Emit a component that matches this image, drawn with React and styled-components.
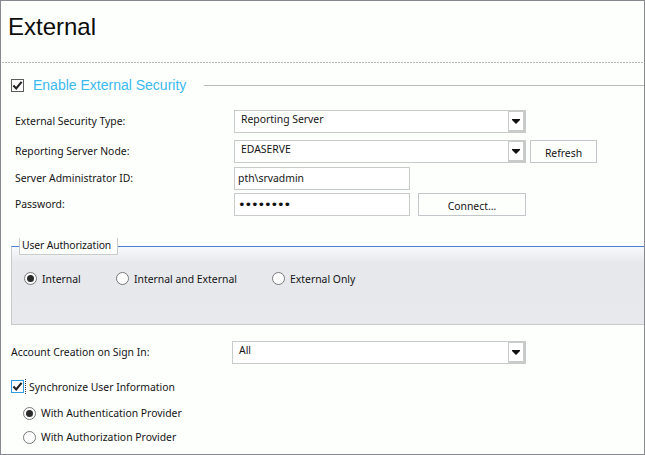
import React from "react";
import styled, { createGlobalStyle } from "styled-components";

const GlobalStyle = createGlobalStyle`
  html, body {
    margin: 0;
    padding: 0;
    background: #fdfffd;
  }
  * {
    box-sizing: border-box;
  }
`;

const Frame = styled.div`
  width: 645px;
  height: 455px;
  border: 1px solid #88888e;
  background: #fdfffd;
  overflow: hidden;
  font-family: "Noto Sans", "Liberation Sans", sans-serif;
  font-size: 10.4px;
  color: #141414;
`;

const Header = styled.div`
  height: 61px;
  margin-left: 1px;
  padding: 11px 0 0 6px;
`;

const Dashed = styled.div`
  height: 1px;
  margin-left: 1px;
  background: repeating-linear-gradient(90deg, #b4b6b6 0 2px, transparent 2px 3px);
`;

const Title = styled.h1`
  margin: 0;
  font-family: "Liberation Sans", Arial, sans-serif;
  font-size: 24px;
  font-weight: 400;
  line-height: 30px;
  color: #0c0c0c;
`;

const SectionHead = styled.div`
  display: flex;
  align-items: center;
  height: 14px;
  margin: 15px 0 0 10px;
`;

const SectionTitle = styled.span`
  margin-left: 9px;
  font-family: "Liberation Sans", Arial, sans-serif;
  font-size: 14px;
  color: #3cb9ee;
`;

const Rule = styled.div`
  flex: 1;
  height: 1px;
  margin-left: 18px;
  background: #b9bbbb;
`;

const Box = styled.span`
  position: relative;
  display: flex;
  align-items: center;
  justify-content: center;
  width: 13px;
  height: 13px;
  border: 1px solid ${(props) => (props.$focused ? "#2c9be0" : "#5c5c5c")};
  background: #fff;
  svg {
    display: block;
  }
`;

const FocusMark = styled.span`
  position: absolute;
  top: -2px;
  right: -3px;
  height: 15px;
  border-right: 1px dotted #333;
`;

const Form = styled.div`
  margin: 18px 0 0 14px;
`;

const FormRow = styled.div`
  display: flex;
  align-items: center;
  height: 23px;
  margin-top: ${(props) => props.$top || 0};
`;

const Label = styled.label`
  flex: none;
  width: ${(props) => props.$width || "219px"};
  margin-top: -2px;
  white-space: nowrap;
`;

const SelectBox = styled.div`
  display: flex;
  justify-content: space-between;
  width: ${(props) => props.$width || "292px"};
  height: 23px;
  padding: 0 0 0 6px;
  border: 1px solid #c8cbca;
  background: #fff;
  line-height: 17px;
`;

const Arrow = styled.span`
  display: flex;
  align-items: center;
  justify-content: center;
  width: 17px;
  height: 21px;
  border: 1px solid #c8cbca;
  border-right-width: 2px;
  border-bottom-width: 2px;
  background: #fff;
`;

const TextInput = styled.input`
  width: 176px;
  height: 23px;
  padding: 0 4px 2px 3px;
  border: 1px solid #c8cbca;
  background: #fff;
  font: inherit;
  color: inherit;
  outline: none;
`;

const PasswordInput = styled(TextInput)`
  padding-bottom: 0;
  font-family: "DejaVu Sans", sans-serif;
  font-size: 13px;
  letter-spacing: -1.17px;
  color: #111;
`;

const Button = styled.button`
  height: 23px;
  width: ${(props) => props.$width};
  margin-left: ${(props) => props.$gap};
  padding: 2px 0 0;
  border: 1px solid #c2c6ca;
  background: #fdfffd;
  font: inherit;
  color: inherit;
`;

const Group = styled.div`
  position: relative;
  height: 79px;
  margin: 30px 0 0 10px;
  border-top: 1px solid #4a7fd0;
  border-left: 1px solid #c8cbca;
  border-bottom: 1px solid #c8cbca;
  background: linear-gradient(#f7fafd 0, #f2f4f7 5px, #e6e8ec 16px, #e7e9ec 100%);
`;

const Legend = styled.div`
  position: absolute;
  top: -9px;
  left: 7px;
  width: 99px;
  height: 17px;
  padding-left: 2px;
  border: 1px solid #c8cbca;
  border-top: 0;
  background: #fdfffd;
  line-height: 15px;
  letter-spacing: -0.15px;
  white-space: nowrap;
`;

const RadioRow = styled.div`
  display: flex;
  align-items: center;
  height: 13px;
  margin: 25px 0 0 12px;
`;

const RadioItem = styled.label`
  display: flex;
  align-items: center;
  gap: 5px;
  width: ${(props) => props.$width};
  margin-left: ${(props) => props.$indent || 0};
  margin-top: ${(props) => props.$top || 0};
  white-space: nowrap;
`;

const Radio = styled.span`
  display: flex;
  align-items: center;
  justify-content: center;
  width: 13px;
  height: 13px;
  border: 1px solid #77797b;
  border-radius: 50%;
  background: #fff;
  &::after {
    content: "";
    display: ${(props) => (props.$on ? "block" : "none")};
    width: 7px;
    height: 7px;
    border-radius: 50%;
    background: #2a2a2a;
  }
`;

const AccountRow = styled(FormRow)`
  margin: 16px 0 0 10px;
`;

const SyncRow = styled.label`
  display: flex;
  align-items: center;
  height: 13px;
  margin: 16px 0 0 10px;
`;

const SyncText = styled.span`
  margin-left: 5px;
  white-space: nowrap;
`;

const Check = () => (
  <svg width="11" height="11" viewBox="0 0 11 11">
    <path d="M1.4 5.6 L4.2 8.4 L9.6 1.8" fill="none" stroke="#222" strokeWidth="2.1" />
  </svg>
);

const Caret = () => (
  <svg width="8" height="5" viewBox="0 0 8 5">
    <path d="M0 0 H8 V1 L4 5 L0 1 Z" fill="#111" />
  </svg>
);

const Select = ({ value, width }) => (
  <SelectBox $width={width}>
    {value}
    <Arrow>
      <Caret />
    </Arrow>
  </SelectBox>
);

export default function App() {
  return (
    <Frame>
      <GlobalStyle />
      <Header>
        <Title>External</Title>
      </Header>
      <Dashed />
      <SectionHead>
        <Box>
          <Check />
        </Box>
        <SectionTitle>Enable External Security</SectionTitle>
        <Rule />
      </SectionHead>
      <Form>
        <FormRow>
          <Label>External Security Type:</Label>
          <Select value="Reporting Server" />
        </FormRow>
        <FormRow $top="7px">
          <Label>Reporting Server Node:</Label>
          <Select value="EDASERVE" />
          <Button $width="67px" $gap="4px">Refresh</Button>
        </FormRow>
        <FormRow $top="4px">
          <Label>Server Administrator ID:</Label>
          <TextInput readOnly value="pth\srvadmin" />
        </FormRow>
        <FormRow $top="3px">
          <Label>Password:</Label>
          <PasswordInput readOnly type="password" value="password" />
          <Button $width="108px" $gap="8px">Connect...</Button>
        </FormRow>
      </Form>
      <Group>
        <Legend>User Authorization</Legend>
        <RadioRow>
          <RadioItem $width="92px">
            <Radio $on />
            Internal
          </RadioItem>
          <RadioItem $width="156px">
            <Radio />
            Internal and External
          </RadioItem>
          <RadioItem>
            <Radio />
            External Only
          </RadioItem>
        </RadioRow>
      </Group>
      <AccountRow>
        <Label $width="221px">Account Creation on Sign In:</Label>
        <Select value="All" width="294px" />
      </AccountRow>
      <SyncRow>
        <Box $focused>
          <Check />
          <FocusMark />
        </Box>
        <SyncText>Synchronize User Information</SyncText>
      </SyncRow>
      <RadioItem $indent="22px" $top="13px">
        <Radio $on />
        With Authentication Provider
      </RadioItem>
      <RadioItem $indent="22px" $top="10px">
        <Radio />
        With Authorization Provider
      </RadioItem>
    </Frame>
  );
}
